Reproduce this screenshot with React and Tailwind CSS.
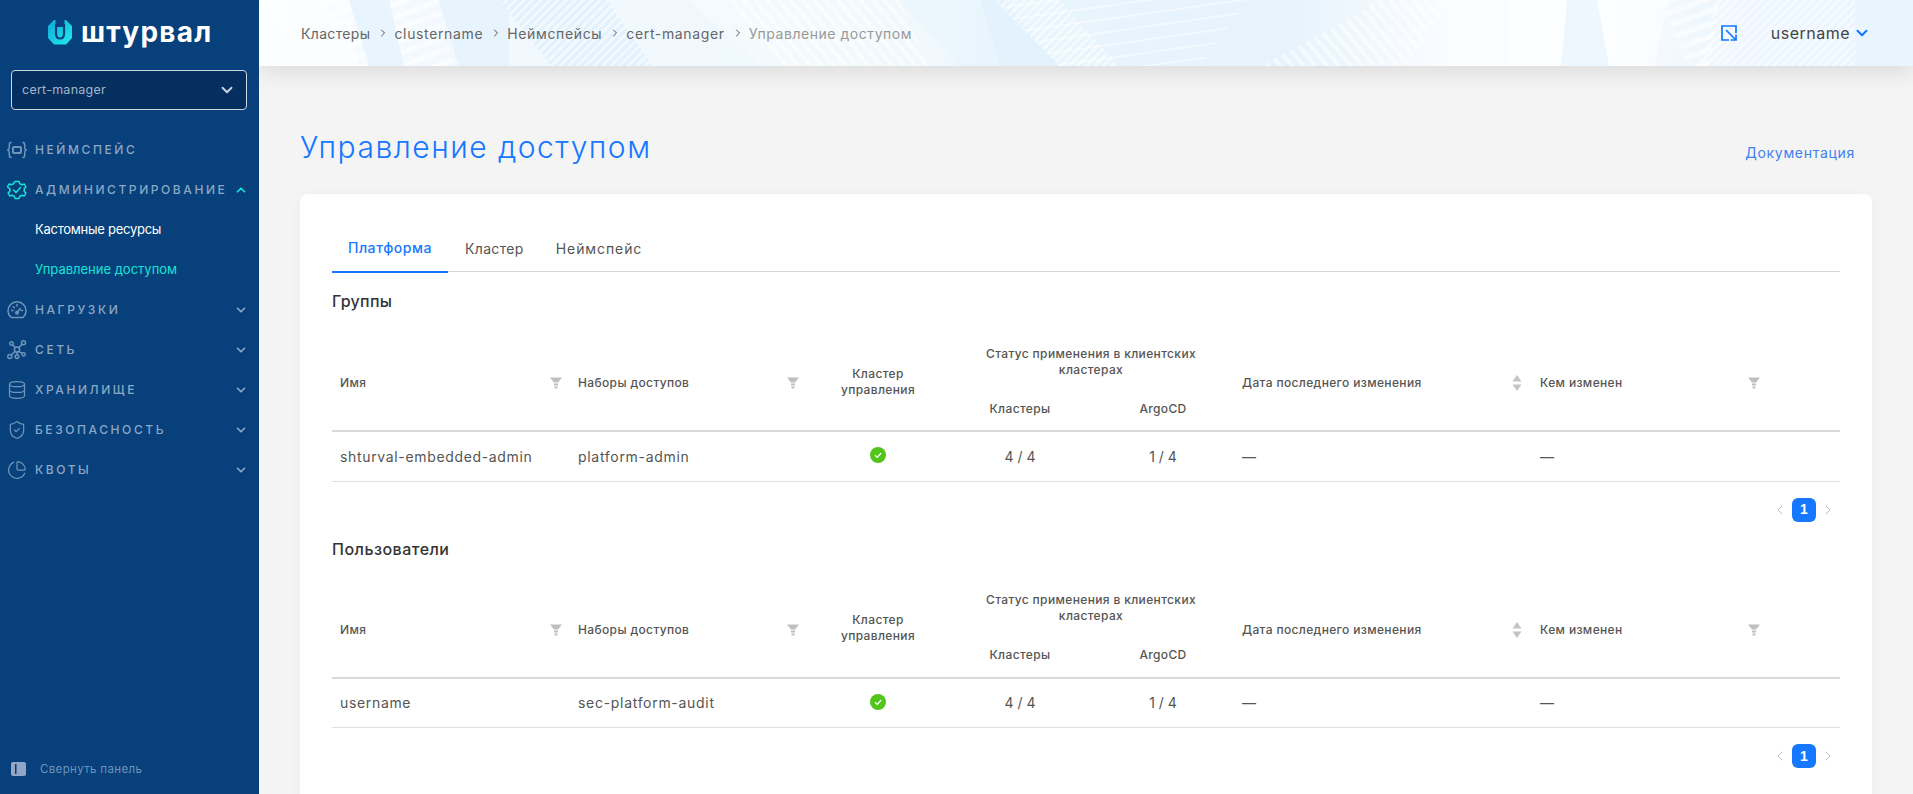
import React from "react";
import { ChevronDown, ChevronUp, ChevronLeft, ChevronRight, Database, ShieldCheck, ChartPie } from "lucide-react";

const NsIcon = () => (
  <svg width="20" height="20" viewBox="0 0 20 20" fill="none" stroke="currentColor" strokeWidth="1.5" strokeLinecap="round">
    <path d="M4 2.5C2.5 2.5 2.3 3.5 2.3 5v2.5c0 1.3-.6 2.2-1.6 2.5 1 .3 1.6 1.2 1.6 2.5V15c0 1.5.2 2.5 1.7 2.5" />
    <path d="M16 2.5c1.5 0 1.7 1 1.7 2.5v2.5c0 1.3.6 2.2 1.6 2.5-1 .3-1.6 1.2-1.6 2.5V15c0 1.5-.2 2.5-1.7 2.5" />
    <rect x="6" y="7" width="8" height="6" rx="1" strokeWidth="2" />
  </svg>
);
const AdminIcon = () => (
  <svg width="20" height="20" viewBox="0 0 20 20" fill="none" stroke="currentColor" strokeWidth="1.5" strokeLinejoin="round" strokeLinecap="round">
    <path d="M8 1.5h4l.8 2.2 2.3 1 2.2-.7 1.6 3-1.7 1.6v2.8l1.7 1.6-1.6 3-2.2-.7-2.3 1-.8 2.2H8l-.8-2.2-2.3-1-2.2.7-1.6-3 1.7-1.6V8.6L.5 7l1.6-3 2.2.7 2.3-1z" />
    <path d="M6.5 10l2.5 2.5 4.5-5" />
  </svg>
);
const GaugeIcon = () => (
  <svg width="20" height="20" viewBox="0 0 20 20" fill="none" stroke="currentColor" strokeWidth="1.5" strokeLinecap="round" strokeLinejoin="round">
    <path d="M4 17.500h12a9 9 0 1 0-12 0z" />
    <path d="M10 4.500v1.500M4.500 10.500H6M14 10.500h1.500M6.300 6.800l1 1M10 12.500l3.300-4" />
    <circle cx="10" cy="12.800" r="1.300" />
  </svg>
);
const NetIcon = () => (
  <svg width="20" height="20" viewBox="0 0 20 20" fill="none" stroke="currentColor" strokeWidth="1.5">
    <circle cx="4.5" cy="3.5" r="1.7" /><circle cx="16.5" cy="2.8" r="2" /><circle cx="2.8" cy="16.5" r="2" /><circle cx="10" cy="16.6" r="1.8" /><circle cx="16.6" cy="14.3" r="1.6" /><circle cx="10" cy="9.5" r="2.6" />
    <path d="M5.6 4.8l2.6 2.8M14.9 4.3l-3 3.4M4.2 15l4-3.7M10 12v3M12 11.5l3.3 1.8" />
  </svg>
);
const Funnel = () => (
  <svg width="12" height="12" viewBox="0 0 12 12" className="shrink-0"><path d="M0 .5h12L8 5.5H4zM4 6.5h4v2H4zM4.5 9.5h3v2h-3z" fill="#bfbfbf" /></svg>
);
const Sort = () => (
  <svg width="10" height="16" viewBox="0 0 10 16" className="shrink-0"><path d="M5 0l4.500 6.500h-9zM5 16L.5 9.500h9z" fill="#c4c4c4" /></svg>
);
const GreenCheck = () => (
  <svg width="16" height="16" viewBox="0 0 16 16" className="mx-auto -mt-[2px] block"><circle cx="8" cy="8" r="8" fill="#52c41a" /><path d="M5 8.200l2.200 2.200L11.200 6" fill="none" stroke="#fff" strokeWidth="1.300" /></svg>
);

function NavRow({ icon, label, open, active }) {
  return (
    <div className={`flex h-10 items-center pl-[7px] pr-[11px] ${active ? "text-[#19e3d6]" : "text-[#6f95bb]"}`}>
      <span className="flex w-5 shrink-0 justify-center">{icon}</span>
      <span className="ml-2 flex-1 text-[12px] font-medium tracking-[0.215em] text-[#8ba8c6]">{label}</span>
      {open === undefined ? null : open ? (
        <ChevronUp size={14} strokeWidth={3} className="text-[#19e3d6]" />
      ) : (
        <ChevronDown size={14} strokeWidth={3} className="text-[#8ba8c6]" />
      )}
    </div>
  );
}

function Sidebar() {
  return (
    <aside className="flex h-full w-[259px] shrink-0 flex-col bg-[#07407a]">
      <div className="flex h-[70px] items-start pl-[47px] pt-[18px]">
        <svg width="26" height="28" viewBox="0 0 26 28">
          <defs>
            <linearGradient id="lg" x1="0" y1="0" x2="1" y2="1"><stop offset="0" stopColor="#10a8d8" /><stop offset="1" stopColor="#22ecec" /></linearGradient>
          </defs>
          <path d="M7 2L1 8v12l6 6.500h12l6-6.500V8l-6-6z" fill="url(#lg)" />
          <path d="M8.500 0h9v9h-9z" fill="#07407a" />
          <path d="M9 6v9.500c0 3 1.500 5 4 5s4-2 4-5V6" fill="none" stroke="#07407a" strokeWidth="2.200" />
          <path d="M13 9.500v8" stroke="url(#lg)" strokeWidth="2.400" />
        </svg>
        <span className="ml-[8px] text-[28px] font-bold leading-[28px] tracking-[0.045em] text-white">штурвал</span>
      </div>
      <div className="ml-[11px] mr-[12px] flex h-10 items-center justify-between rounded border border-[#cdd6e0] bg-[#042f5e] pl-[10px] pr-[10px]">
        <span className="text-[12.500px] tracking-[0.02em] text-[#a3b6cc]">cert-manager</span>
        <ChevronDown size={18} strokeWidth={2.500} className="text-[#cdd6e0]" />
      </div>
      <div className="mt-[20px] flex flex-1 flex-col">
        <NavRow icon={<NsIcon />} label="НЕЙМСПЕЙС" />
        <NavRow icon={<AdminIcon />} label="АДМИНИСТРИРОВАНИЕ" open active />
        <div className="flex h-10 items-center pl-[35px] text-[13px] tracking-[-0.02em] text-white">Кастомные ресурсы</div>
        <div className="flex h-10 items-center pl-[35px] text-[13px] text-[#19e3d6]">Управление доступом</div>
        <NavRow icon={<GaugeIcon />} label="НАГРУЗКИ" open={false} />
        <NavRow icon={<NetIcon />} label="СЕТЬ" open={false} />
        <NavRow icon={<Database size={20} strokeWidth={1.500} />} label="ХРАНИЛИЩЕ" open={false} />
        <NavRow icon={<ShieldCheck size={20} strokeWidth={1.500} />} label="БЕЗОПАСНОСТЬ" open={false} />
        <NavRow icon={<ChartPie size={20} strokeWidth={1.500} />} label="КВОТЫ" open={false} />
      </div>
      <div className="flex items-center pb-[16px] pl-[11px]">
        <svg width="15" height="14" viewBox="0 0 15 14"><rect width="15" height="14" rx="2" fill="#93a6c6" /><rect x="4" y="2" width="1.500" height="10" fill="#0a3a70" /></svg>
        <span className="ml-[14px] text-[11.500px] tracking-[0.03em] text-[#6d93ba]">Свернуть панель</span>
      </div>
    </aside>
  );
}

function HeaderArt() {
  return (
    <svg className="absolute inset-0 h-full w-full" viewBox="0 0 1654 66" preserveAspectRatio="none">
      <defs>
        <pattern id="p1" width="6" height="6" patternUnits="userSpaceOnUse" patternTransform="rotate(45)"><rect width="3" height="6" fill="#fff" fillOpacity="0.55" /></pattern>
        <pattern id="p2" width="9" height="9" patternUnits="userSpaceOnUse" patternTransform="rotate(-40)"><rect width="4" height="9" fill="#fff" fillOpacity="0.5" /></pattern>
        <pattern id="p3" width="12" height="12" patternUnits="userSpaceOnUse" patternTransform="rotate(70)"><rect width="5" height="12" fill="#fff" fillOpacity="0.6" /></pattern>
        <pattern id="p4" width="13" height="13" patternUnits="userSpaceOnUse" patternTransform="rotate(-8)"><rect width="13" height="1.500" y="6" fill="#fff" fillOpacity="0.6" /></pattern>
      </defs>
      <polygon points="0,0 90,0 100,66 45,66" fill="#fff" fillOpacity="0.35" />
      <polygon points="50,0 180,0 195,66 100,66" fill="url(#p3)" />
      <polygon points="90,0 130,0 145,66 110,66" fill="#e9f5fe" />
      <polygon points="180,0 250,0 250,66 200,66" fill="#e7f4fd" />
      <polygon points="240,0 348,0 393,66 292,66" fill="#e2f2fd" />
      <polygon points="240,0 348,0 393,66 292,66" fill="url(#p1)" />
      <polygon points="430,0 640,0 700,66 500,66" fill="#ffffff" fillOpacity="0.25" />
      <polygon points="465,0 640,0 670,66 520,66" fill="url(#p2)" />
      <polygon points="721,0 745,0 800,66 741,66" fill="#e3f2fc" />
      <polygon points="735,0 990,0 940,66 800,66" fill="url(#p4)" />
      <polygon points="735,0 800,0 860,66 800,66" fill="url(#p1)" />
      <polygon points="1002,66 1110,8 1110,66" fill="url(#p2)" />
      <polygon points="1110,0 1190,0 1150,66 1110,66" fill="url(#p2)" />
      <polygon points="1250,0 1410,0 1395,66 1250,66" fill="#fff" fillOpacity="0.5" />
      <polygon points="1308,0 1338,0 1350,66 1302,66" fill="#eef7fe" />
      <polygon points="1400,0 1460,0 1450,66 1430,66" fill="url(#p3)" />
      <polygon points="1457,0 1596,0 1596,66 1440,66" fill="url(#p1)" />
    </svg>
  );
}

function Header() {
  const Sep = () => <ChevronRight size={12} strokeWidth={2} className="ml-[7px] mr-[5px] text-[#555]" />;
  return (
    <header className="relative z-10 h-[66px] shrink-0 bg-[linear-gradient(90deg,#fcfdff_0%,#f3f9fe_10%,#f1f8fe_22%,#eff8fd_34%,#e9f5fd_45%,#e6f3fc_62%,#fafcff_72%,#fafcff_81%,#eef7fe_88%,#e8f4fe_100%)] shadow-[0_6px_22px_rgba(0,0,0,0.10)]">
      <HeaderArt />
      <div className="relative flex h-full items-center pl-[42px] pr-[42px] text-[14px] text-[#666]">
        <span className="tracking-[0.025em]">Кластеры</span><Sep />
        <span className="tracking-[0.046em]">clustername</span><Sep />
        <span className="tracking-[0.046em]">Неймспейсы</span><Sep />
        <span className="tracking-[0.046em]">cert-manager</span><Sep />
        <span className="tracking-[0.039em] text-[#999]">Управление доступом</span>
        <div className="ml-auto flex items-center">
          <svg width="16" height="16" viewBox="0 0 16 16" fill="none" stroke="#1677ff" strokeWidth="1.700">
            <path d="M15 8V1H1v14h7M5 5l9.500 9.500M15 9.500V15H9.500" />
          </svg>
          <span className="ml-[34px] text-[16px] tracking-[0.03em] text-[#444]">username</span>
          <ChevronDown size={18} strokeWidth={2.800} className="ml-[3px] text-[#1677ff]" />
        </div>
      </div>
    </header>
  );
}

function HeadCell({ children, right, className = "" }) {
  return (
    <th rowSpan={2} className={`pl-2 text-left text-[12px] font-medium tracking-[0.03em] text-[#555] ${className}`}>
      <div className="flex items-center justify-between">
        <span>{children}</span>
        {right}
      </div>
    </th>
  );
}

function AccessTable({ name, set }) {
  return (
    <table className="w-full table-fixed border-collapse">
      <colgroup>
        <col className="w-[238px]" />
        <col className="w-[238px]" />
        <col className="w-[140px]" />
        <col className="w-[144px]" />
        <col className="w-[142px]" />
        <col className="w-[298px]" />
        <col className="w-[238px]" />
        <col />
      </colgroup>
      <thead>
        <tr className="h-[51px]">
          <HeadCell className="pr-2" right={<Funnel />}>Имя</HeadCell>
          <HeadCell className="pr-[9px]" right={<Funnel />}>Наборы доступов</HeadCell>
          <th rowSpan={2} className="px-2 pb-[3px] text-center text-[12px] font-medium leading-4 tracking-[0.03em] text-[#555]">Кластер<br />управления</th>
          <th colSpan={2} className="px-0 text-center text-[12px] font-medium leading-4 tracking-[0.03em] text-[#555]">Статус применения в клиентских<br />кластерах</th>
          <HeadCell className="pr-[10px]" right={<Sort />}>Дата последнего изменения</HeadCell>
          <HeadCell className="pr-[10px]" right={<Funnel />}>Кем изменен</HeadCell>
          <th rowSpan={2} />
        </tr>
        <tr className="h-[43px]">
          <th className="text-center text-[12px] font-medium tracking-[0.03em] text-[#555]">Кластеры</th>
          <th className="text-center text-[12px] font-medium tracking-[0.03em] text-[#555]">ArgoCD</th>
        </tr>
        <tr className="h-0"><th colSpan={8} className="h-0 border-b-2 border-[#d9d9d9] p-0" /></tr>
      </thead>
      <tbody>
        <tr className="h-[50px] border-b border-[#e0e0e0] text-[14px] text-[#555]">
          <td className="px-2 tracking-[0.047em]">{name}</td>
          <td className="px-2 tracking-[0.05em]">{set}</td>
          <td className="text-center"><GreenCheck /></td>
          <td className="text-center">4 / 4</td>
          <td className="text-center">1 / 4</td>
          <td className="px-2">—</td>
          <td className="px-2">—</td>
          <td />
        </tr>
      </tbody>
    </table>
  );
}

function Pager() {
  return (
    <div className="mt-[16px] flex items-center justify-end gap-[4px] pr-[4px]">
      <ChevronLeft size={16} strokeWidth={1.500} className="text-[#bfbfbf]" />
      <span className="flex h-6 w-6 items-center justify-center rounded-md bg-[#1677ff] font-['Liberation_Sans',sans-serif] text-[14px] font-bold text-white">1</span>
      <ChevronRight size={16} strokeWidth={1.500} className="text-[#bfbfbf]" />
    </div>
  );
}

export default function App() {
  return (
    <div className="flex h-screen w-full overflow-hidden bg-[#f4f4f4] font-['Inter',sans-serif]">
      <Sidebar />
      <main className="flex min-w-0 flex-1 flex-col overflow-hidden">
        <Header />
        <div className="px-[41px]">
          <div className="mt-[63px] mb-[29px] flex h-9 items-start justify-between">
            <h1 className="text-[30px] font-light leading-9 tracking-[0.05em] text-[#1677ff]">Управление доступом</h1>
            <a className="mt-[14px] mr-[17px] text-[14px] leading-[20px] tracking-[0.05em] text-[#3f7ff2]">Документация</a>
          </div>
          <section className="rounded-lg bg-white px-[32px] pt-[32px] shadow-[0_2px_12px_rgba(0,0,0,0.04)]">
            <div className="flex h-[46px] border-b border-[#d9d9d9] text-[14px]">
              <div className="flex h-[47px] w-[116px] items-center justify-center border-b-2 border-[#1677ff] pb-[2px] font-medium tracking-[0.04em] text-[#1677ff]">Платформа</div>
              <div className="ml-[17px] flex h-[46px] items-center pb-[2px] tracking-[0.025em] text-[#555]">Кластер</div>
              <div className="ml-[32px] flex h-[46px] items-center pb-[2px] tracking-[0.065em] text-[#555]">Неймспейс</div>
            </div>
            <h2 className="mt-[17px] mb-[23px] text-[16px] font-medium leading-6 tracking-[0.02em] text-[#333]">Группы</h2>
            <AccessTable name="shturval-embedded-admin" set="platform-admin" />
            <Pager />
            <h2 className="mt-[15px] mb-[22px] text-[16px] font-medium leading-6 tracking-[0.03em] text-[#333]">Пользователи</h2>
            <AccessTable name="username" set="sec-platform-audit" />
            <Pager />
            <div className="h-10" />
          </section>
        </div>
      </main>
    </div>
  );
}
